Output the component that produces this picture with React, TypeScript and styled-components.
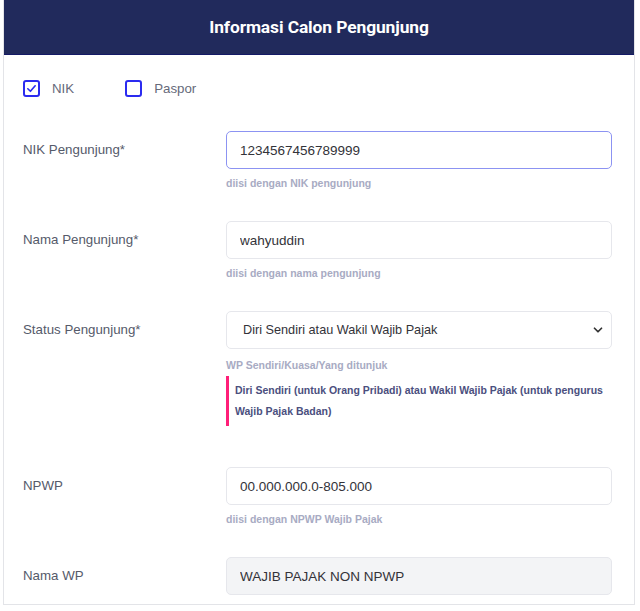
import React from 'react'
import styled, { createGlobalStyle } from 'styled-components'
import { ChevronDown } from 'lucide-react'

const GlobalStyle = createGlobalStyle`
    body {
        margin: 0;
        background: #ffffff;
        font-family: "Liberation Sans", Arial, sans-serif;
    }
`

const Card = styled.div`
    margin: 0 5px 0 3px;
    border: 1px solid #e3e4e8;
    border-top: none;
    height: 605px;
    box-sizing: border-box;
    overflow: hidden;
`
const Header = styled.div`
    height: 54px;
    background: #212a5c;
    border-bottom: 1px solid #141a66;
    display: flex;
    align-items: center;
    justify-content: center;
    margin: 0 -1px;
`
const Title = styled.h2`
    margin: 0;
    color: #ffffff;
    font-family: Roboto, "Liberation Sans", sans-serif;
    font-weight: 700;
    font-size: 17.4px;
    letter-spacing: -0.1px;
`
const Body = styled.div`
    padding: 0 22px 0 19px;
    display: flex;
    flex-direction: column;
`
const CheckRow = styled.div`
    display: flex;
    align-items: center;
    gap: 51px;
    margin-top: 25px;
    margin-bottom: 34px;
`
const CheckItem = styled.label`
    display: flex;
    align-items: center;
    gap: 12px;
    font-size: 13.3px;
    color: #666a7a;
`
const Box = styled.span`
    width: 17px;
    height: 17px;
    box-sizing: border-box;
    border: 2px solid #2b2bf0;
    border-radius: 3px;
    display: flex;
    align-items: center;
    justify-content: center;
`
const Row = styled.div<{ gapBelow: number }>`
    display: grid;
    grid-template-columns: 203px 1fr;
    margin-bottom: ${p => p.gapBelow}px;
`
const Label = styled.div`
    font-size: 13.3px;
    line-height: 38px;
    color: #555a6a;
`
const Control = styled.div`
    display: flex;
    flex-direction: column;
`
const Input = styled.input<{ focused?: boolean; muted?: boolean }>`
    height: 38px;
    box-sizing: border-box;
    border: 1px solid ${p => (p.focused ? '#8c93f2' : '#e6e7ec')};
    border-radius: 5px;
    padding: 0 13px;
    font-family: "Liberation Sans", Arial, sans-serif;
    font-size: 13.5px;
    color: #333339;
    background: ${p => (p.muted ? '#f3f4f6' : '#ffffff')};
    outline: none;
    caret-color: #222;
`
const SelectWrap = styled.div`
    position: relative;
`
const Select = styled.select`
    width: 100%;
    height: 38px;
    box-sizing: border-box;
    border: 1px solid #e6e7ec;
    border-radius: 5px;
    padding: 0 16px;
    font-family: "Liberation Sans", Arial, sans-serif;
    font-size: 12.7px;
    color: #333339;
    background: #ffffff;
    appearance: none;
    outline: none;
`
const Chevron = styled(ChevronDown)`
    position: absolute;
    right: 7px;
    top: 12px;
    pointer-events: none;
`
const Hint = styled.div<{ top?: number }>`
    margin-top: ${p => p.top ?? 8}px;
    font-size: 10.5px;
    font-weight: 700;
    line-height: 13px;
    color: #a8abc3;
`
const Note = styled.div`
    margin-top: 4px;
    border-left: 3px solid #ff1f78;
    padding: 4px 0 4px 6px;
    font-size: 10.5px;
    font-weight: 700;
    line-height: 21px;
    color: #4b4f7e;
`

const Check = ({ checked }: { checked?: boolean }) => (
    <Box>
        {checked && (
            <svg width="11" height="11" viewBox="0 0 12 12">
                <path d="M2 6.3 L4.8 9 L10 3" fill="none" stroke="#2b2bf0" strokeWidth="1.8" strokeLinecap="round" strokeLinejoin="round" />
            </svg>
        )}
    </Box>
)

const App = () => {
    return (
        <>
            <GlobalStyle />
            <Card>
                <Header>
                    <Title>Informasi Calon Pengunjung</Title>
                </Header>
                <Body>
                    <CheckRow>
                        <CheckItem><Check checked />NIK</CheckItem>
                        <CheckItem><Check />Paspor</CheckItem>
                    </CheckRow>
                    <Row gapBelow={31}>
                        <Label>NIK Pengunjung*</Label>
                        <Control>
                            <Input focused autoFocus defaultValue="1234567456789999" />
                            <Hint>diisi dengan NIK pengunjung</Hint>
                        </Control>
                    </Row>
                    <Row gapBelow={31}>
                        <Label>Nama Pengunjung*</Label>
                        <Control>
                            <Input defaultValue="wahyuddin" />
                            <Hint>diisi dengan nama pengunjung</Hint>
                        </Control>
                    </Row>
                    <Row gapBelow={41}>
                        <Label>Status Pengunjung*</Label>
                        <Control>
                            <SelectWrap>
                                <Select defaultValue="diri">
                                    <option value="diri">Diri Sendiri atau Wakil Wajib Pajak</option>
                                </Select>
                                <Chevron size={14} strokeWidth={3} color="#333" />
                            </SelectWrap>
                            <Hint top={10}>WP Sendiri/Kuasa/Yang ditunjuk</Hint>
                            <Note>
                                Diri Sendiri (untuk Orang Pribadi) atau Wakil Wajib Pajak (untuk pengurus<br />
                                Wajib Pajak Badan)
                            </Note>
                        </Control>
                    </Row>
                    <Row gapBelow={31}>
                        <Label>NPWP</Label>
                        <Control>
                            <Input defaultValue="00.000.000.0-805.000" />
                            <Hint>diisi dengan NPWP Wajib Pajak</Hint>
                        </Control>
                    </Row>
                    <Row gapBelow={0}>
                        <Label>Nama WP</Label>
                        <Control>
                            <Input muted readOnly defaultValue="WAJIB PAJAK NON NPWP" />
                        </Control>
                    </Row>
                </Body>
            </Card>
        </>
    )
}

export default App
